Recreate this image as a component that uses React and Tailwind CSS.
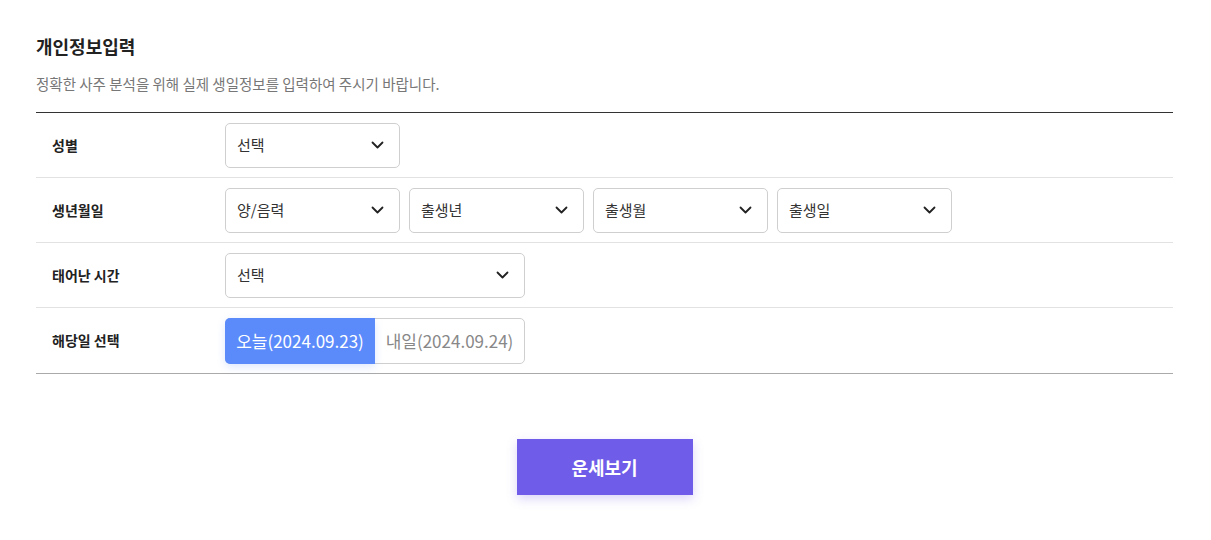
import React from "react";

const Chevron = () => (
  <svg width="13" height="8" viewBox="0 0 13 8" fill="none">
    <path d="M1.5 1.5L6.5 6.5L11.5 1.5" stroke="#222" strokeWidth="1.8" strokeLinecap="round" strokeLinejoin="round" />
  </svg>
);

const Select = ({ label, w }) => (
  <div className={`${w} h-[45px] border border-[#cfcfcf] rounded-[5px] flex items-center justify-between pl-[11px] pr-[15px] text-[15px] text-[#333]`}>
    <span>{label}</span>
    <Chevron />
  </div>
);

const Row = ({ label, children, last }) => (
  <div className={`flex items-center h-[65px] ${last ? "" : "border-b border-[#e2e2e2]"}`}>
    <div className="w-[189px] pl-[16px] text-[14px] font-bold text-[#222]">{label}</div>
    <div className="flex gap-[9px]">{children}</div>
  </div>
);

export default function App() {
  return (
    <div className="bg-white w-[1211px] h-[540px] pl-[36px] pr-[38px] pt-[33px]" style={{ fontFamily: '"Noto Sans CJK KR", "Noto Sans", sans-serif' }}>
      <h1 className="text-[18px] font-bold text-[#222] leading-[26px]">개인정보입력</h1>
      <p className="mt-[15px] text-[14.5px] text-[#777] leading-[20px]">정확한 사주 분석을 위해 실제 생일정보를 입력하여 주시기 바랍니다.</p>
      <div className="mt-[18px] border-t border-[#333] border-b border-b-[#aaa]">
        <Row label="성별">
          <Select label="선택" w="w-[175px]" />
        </Row>
        <Row label="생년월일">
          <Select label="양/음력" w="w-[175px]" />
          <Select label="출생년" w="w-[175px]" />
          <Select label="출생월" w="w-[175px]" />
          <Select label="출생일" w="w-[175px]" />
        </Row>
        <Row label="태어난 시간">
          <Select label="선택" w="w-[300px]" />
        </Row>
        <Row label="해당일 선택" last>
          <div className="flex h-[46px] w-[300px] border border-[#cfcfcf] rounded-[5px]">
            <div className="w-[150px] -m-px h-[46px] bg-[#5b8bfb] rounded-l-[5px] text-white text-[17px] flex items-center justify-center shadow-[0_3px_8px_rgba(91,139,251,0.2)]">오늘(2024.09.23)</div>
            <div className="flex-1 text-[17px] text-[#888] flex items-center justify-center pl-[1px]">내일(2024.09.24)</div>
          </div>
        </Row>
      </div>
      <div className="flex justify-center mt-[65px]">
        <button className="w-[176px] h-[56px] bg-[#6f5ce8] text-white text-[18px] font-bold shadow-[0_4px_10px_rgba(111,92,232,0.25)]">운세보기</button>
      </div>
    </div>
  );
}
